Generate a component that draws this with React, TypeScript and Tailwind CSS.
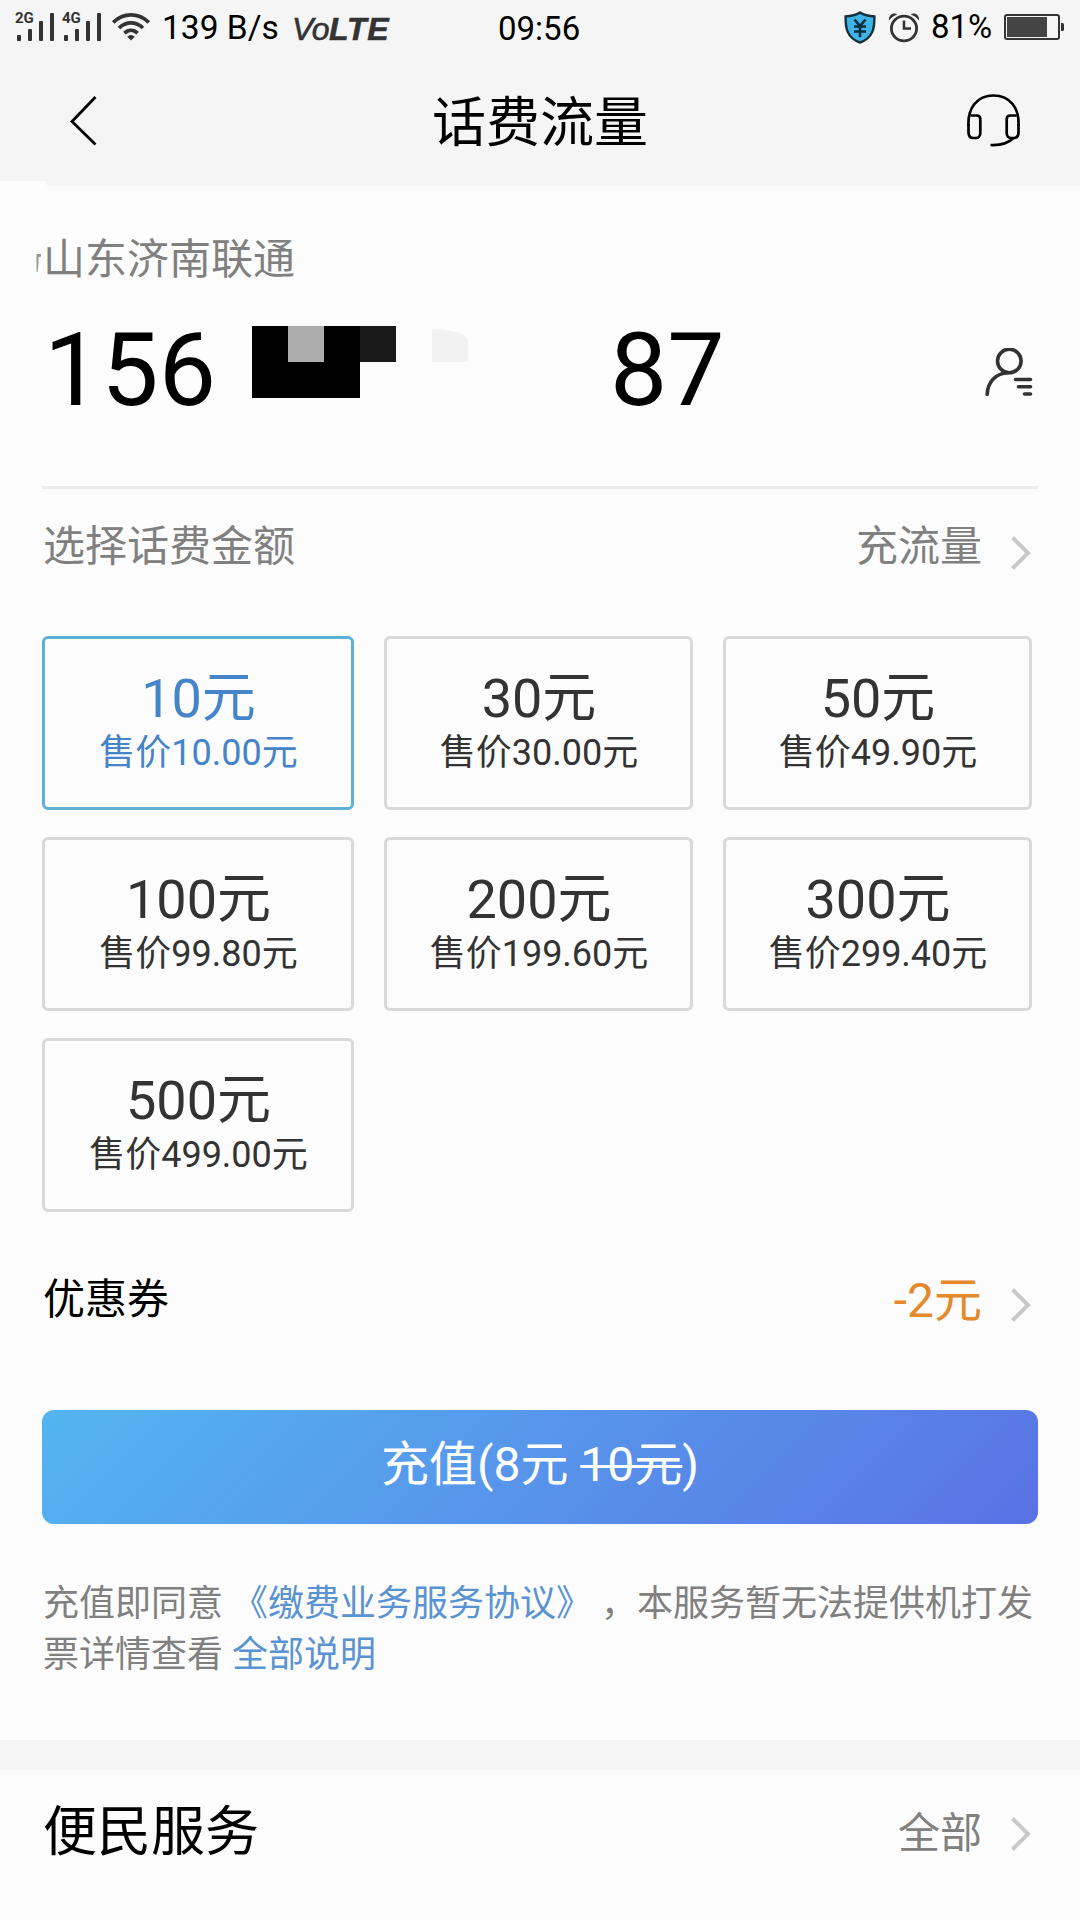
import { useState } from 'react'

const plans = [
  { amount: '10元', price: '售价10.00元' },
  { amount: '30元', price: '售价30.00元' },
  { amount: '50元', price: '售价49.90元' },
  { amount: '100元', price: '售价99.80元' },
  { amount: '200元', price: '售价199.60元' },
  { amount: '300元', price: '售价299.40元' },
  { amount: '500元', price: '售价499.00元' },
]

function Signal({ label }: { label: string }) {
  return (
    <div className="relative h-[28px] w-[38px]">
      <span className="absolute -left-px -top-px font-[Roboto] text-[15px] font-bold leading-[13px] text-[#333]">{label}</span>
      <svg className="block" width="38" height="28" viewBox="0 0 38 28" fill="#333">
        <rect x="1" y="22" width="4" height="6" rx="1" />
        <rect x="12" y="16" width="4" height="12" rx="1" />
        <rect x="23" y="8" width="4" height="20" rx="1" />
        <rect x="34" y="0" width="4" height="28" rx="1" />
      </svg>
    </div>
  )
}

function WifiIcon() {
  return (
    <svg width="38" height="28" viewBox="0 0 38 28" fill="none" stroke="#333" strokeWidth="3.800">
      <path d="M1.200 9.400C11.500-.6 26.500-.6 36.800 9.400" />
      <path d="M7 15C14 8.200 24 8.200 31 15" />
      <path d="M12.400 20.200C16.400 16.400 21.600 16.400 25.600 20.200" />
      <path d="M15.200 23.800Q19 20.400 22.800 23.800L19 27.600Z" fill="#333" stroke="none" />
    </svg>
  )
}

function ShieldIcon() {
  return (
    <svg width="32" height="33" viewBox="0 0 32 33" fill="none">
      <path d="M16 1.500C12 4 6.500 5.200 1.600 5.400C1.400 17 3 27 16 31.500C29 27 30.600 17 30.400 5.400C25.500 5.200 20 4 16 1.500Z" fill="#3fb4e6" stroke="#16303a" strokeWidth="2.400" />
      <path d="M10.500 8.500L16 15L21.500 8.500M10 15.500H22M10 20.500H22M16 15V26" stroke="#0c2d3c" strokeWidth="2.600" />
    </svg>
  )
}

function AlarmIcon() {
  return (
    <svg width="32" height="31" viewBox="0 0 32 31" fill="none" stroke="#333">
      <ellipse cx="16" cy="16.500" rx="12.600" ry="12.300" strokeWidth="2.800" />
      <path d="M16 8.500V16.500H23" strokeWidth="2.600" />
      <path d="M1 8.500C0 4 4.500-.5 9.500 2.200C6 3.500 3.200 5.600 1 8.500ZM31 8.500C32 4 27.500-.5 22.500 2.200C26 3.500 28.800 5.600 31 8.500Z" fill="#333" stroke="none" />
    </svg>
  )
}

function BatteryIcon() {
  return (
    <svg width="61" height="26" viewBox="0 0 61 26" fill="none">
      <rect x="1" y="1" width="54" height="24" rx="2" stroke="#333" strokeWidth="2" />
      <rect x="3" y="3" width="40" height="20" fill="#444" />
      <path d="M57 9h1.500a1.500 1.500 0 0 1 1.500 1.500v5a1.500 1.500 0 0 1-1.500 1.500H57z" fill="#333" />
    </svg>
  )
}

function HeadsetIcon() {
  return (
    <svg width="53" height="54" viewBox="0 0 53 54" fill="none" stroke="#000" strokeWidth="2.700">
      <path d="M1.500 32C.5 14 10 1.500 26.500 1.500S52.500 14 51.500 32" />
      <path d="M3.500 21.500H9.500C12 21.500 13.300 23 13.300 25V39C13.300 42 11.500 44 9 44H6.500C3.500 44 1.500 42 1.500 38.500V30" />
      <path d="M49.500 21.500H43.500C41 21.500 39.700 23 39.700 25V39C39.700 42 41.500 44 44 44H46.500C49.500 44 51.500 42 51.500 38.500V30" />
      <path d="M46.500 44C41 49.500 34.500 51.500 23.500 51" />
    </svg>
  )
}

function ContactIcon() {
  return (
    <svg width="48" height="49" viewBox="0 0 48 49" fill="none" stroke="#333" strokeWidth="3.600" strokeLinecap="round">
      <circle cx="24.300" cy="13" r="11.800" />
      <path d="M2.200 46.500C2.600 34 11 25.200 23 24.800" />
      <path d="M30.500 31.500H45.500M33.500 38.700H45.500M39.500 46H45.500" />
    </svg>
  )
}

function Arrow() {
  return (
    <svg width="20" height="34" viewBox="0 0 20 34" fill="none" stroke="#c8c8c8" strokeWidth="4">
      <path d="M1.500 1.500L17 17L1.500 32.500" />
    </svg>
  )
}

export default function App() {
  const [selected, setSelected] = useState(0)

  return (
    <div className="h-[1920px] w-[1080px] overflow-hidden bg-[#fcfcfc] font-[Roboto,'Noto_Sans_CJK_SC',sans-serif] text-black">
      <header className="relative h-[186px] bg-[#f5f5f5]">
        {/* 状态栏 */}
        <div className="flex h-[56px] items-start">
          <div className="flex w-[498px] items-start pl-[16px] pt-[13px]">
            <Signal label="2G" />
            <div className="ml-[9px]">
              <Signal label="4G" />
            </div>
            <div className="ml-[11px]">
              <WifiIcon />
            </div>
            <span className="ml-[12px] w-[130px] whitespace-nowrap text-[33.5px] leading-[30px]">139 B/s</span>
            <span className="mt-px flex font-['Liberation_Sans'] text-[32px] italic leading-[30px] text-[#333]">
              <span className="tracking-[-0.5px] [-webkit-text-stroke:0.6px_#333]">Vo</span>
              <span className="font-bold tracking-[0.8px] [-webkit-text-stroke:0.6px_#333]">LTE</span>
            </span>
          </div>
          <span className="mt-[13px] w-[346px] text-[33px] leading-[32px]">09:56</span>
          <div className="mt-[11px]">
            <ShieldIcon />
          </div>
          <div className="ml-[12px] mt-[12px]">
            <AlarmIcon />
          </div>
          <span className="ml-[11px] mt-[12px] w-[73px] text-[33px] leading-[30px]">81%</span>
          <div className="mt-[14px]">
            <BatteryIcon />
          </div>
        </div>

        {/* 导航栏 */}
        <div className="flex h-[130px] items-center justify-between pl-[69px] pr-[60px]">
          <svg className="-mt-[1px]" width="44" height="52" viewBox="0 0 44 52" fill="none" stroke="#000" strokeWidth="2.800">
            <path d="M26.500 2L3 26.500L26.500 49.500" />
          </svg>
          <h1 className="pt-[5px] text-[54px] leading-[60px]">话费流量</h1>
          <HeadsetIcon />
        </div>
        <div className="absolute bottom-0 left-0 h-[5px] w-[47px] bg-[#fcfcfc]" />
      </header>

      <main className="pt-[53px]">
        {/* 号码 */}
        <div className="flex items-center pl-[36px] text-[42px] leading-[42px] text-[#808080]">
          <svg className="mt-[6px]" width="7" height="20" viewBox="0 0 7 20" fill="#999">
            <path d="M.5 1H2.500V10L1.500 19H.5ZM2.500 1H5V2.500L4.500 4H2.500Z" />
          </svg>
          <span>山东济南联通</span>
        </div>
        <div className="mt-[38px] flex h-[102px] items-start pl-[44px] text-[102px] leading-[102px]">
          <span className="w-[208px]">156</span>
          <div className="mt-[7px] grid grid-cols-[36px_36px_36px_36px] grid-rows-[36px_36px]">
            <i className="bg-black" />
            <i className="bg-[#adadad]" />
            <i className="bg-black" />
            <i className="bg-[#1a1a1a]" />
            <i className="col-span-3 bg-black" />
          </div>
          <i className="ml-[36px] mt-[10px] h-[33px] w-[36px] rounded-tr-[36px_12px] bg-[#f2f2f2]" />
          <span className="ml-[142px] w-[375px]">87</span>
          <div className="mt-[29px]">
            <ContactIcon />
          </div>
        </div>
        <div className="mx-[42px] mt-[65px] h-[3px] bg-[#ececec]" />

        {/* 面额选择 */}
        <div className="mt-[28px] flex h-[62px] items-center justify-between pl-[43px] pr-[49px] text-[42px] leading-[60px] text-[#808080]">
          <span className="mb-[2px]">选择话费金额</span>
          <div className="flex items-center gap-[29px]">
            <span className="mb-[2px]">充流量</span>
            <div className="mt-[9px]">
              <Arrow />
            </div>
          </div>
        </div>
        <div className="mt-[57px] grid grid-cols-[312px_309px_309px] gap-x-[30px] gap-y-[27px] pl-[42px]">
          {plans.map((plan, i) => (
            <button
              key={plan.amount}
              onClick={() => setSelected(i)}
              className={`flex h-[174px] flex-col items-center rounded-[6px] border-[3px] pl-px pt-[33px] leading-[54px] ${
                selected === i ? 'border-[#5fb0d6] text-[#4484c8]' : 'border-[#d9d9d9] text-[#333]'
              }`}
            >
              <span className="text-[54px]">{plan.amount}</span>
              <span className="text-[36px]">{plan.price}</span>
            </button>
          ))}
        </div>

        {/* 优惠券 */}
        <div className="mt-[57px] flex h-[62px] items-center justify-between pl-[43px] pr-[49px] leading-[62px]">
          <span className="text-[42px]">优惠券</span>
          <div className="flex items-center gap-[29px]">
            <span className="mt-[2px] text-[48px] text-[#e58a2c]">-2元</span>
            <div className="mt-[9px]">
              <Arrow />
            </div>
          </div>
        </div>

        <button className="mx-[42px] mt-[79px] block h-[114px] w-[996px] rounded-[12px] bg-linear-135 from-[#53b5f0] to-[#5972e4] pb-[4px] text-[48px] leading-[108px] text-white">
          充值(8元 <del className="decoration-[3px]">10元</del>)
        </button>

        <p className="ml-[43px] mt-[55px] whitespace-nowrap text-[36px] leading-[51px] text-[#808080]">
          充值即同意 <a className="text-[#5a93d2]">《缴费业务服务协议》</a> ，本服务暂无法提供机打发
          <br />
          票详情查看 <a className="text-[#5a93d2]">全部说明</a>
        </p>
      </main>

      <div className="mt-[59px] h-[30px] bg-[#f5f5f5]" />

      {/* 便民服务 */}
      <section className="mt-[32px] flex h-[62px] items-center justify-between pl-[43px] pr-[49px] leading-[62px]">
        <h2 className="text-[54px]">便民服务</h2>
        <div className="flex items-center gap-[29px] text-[42px] text-[#808080]">
          <span className="mt-px">全部</span>
          <div className="mt-[2px]">
            <Arrow />
          </div>
        </div>
      </section>
    </div>
  )
}
